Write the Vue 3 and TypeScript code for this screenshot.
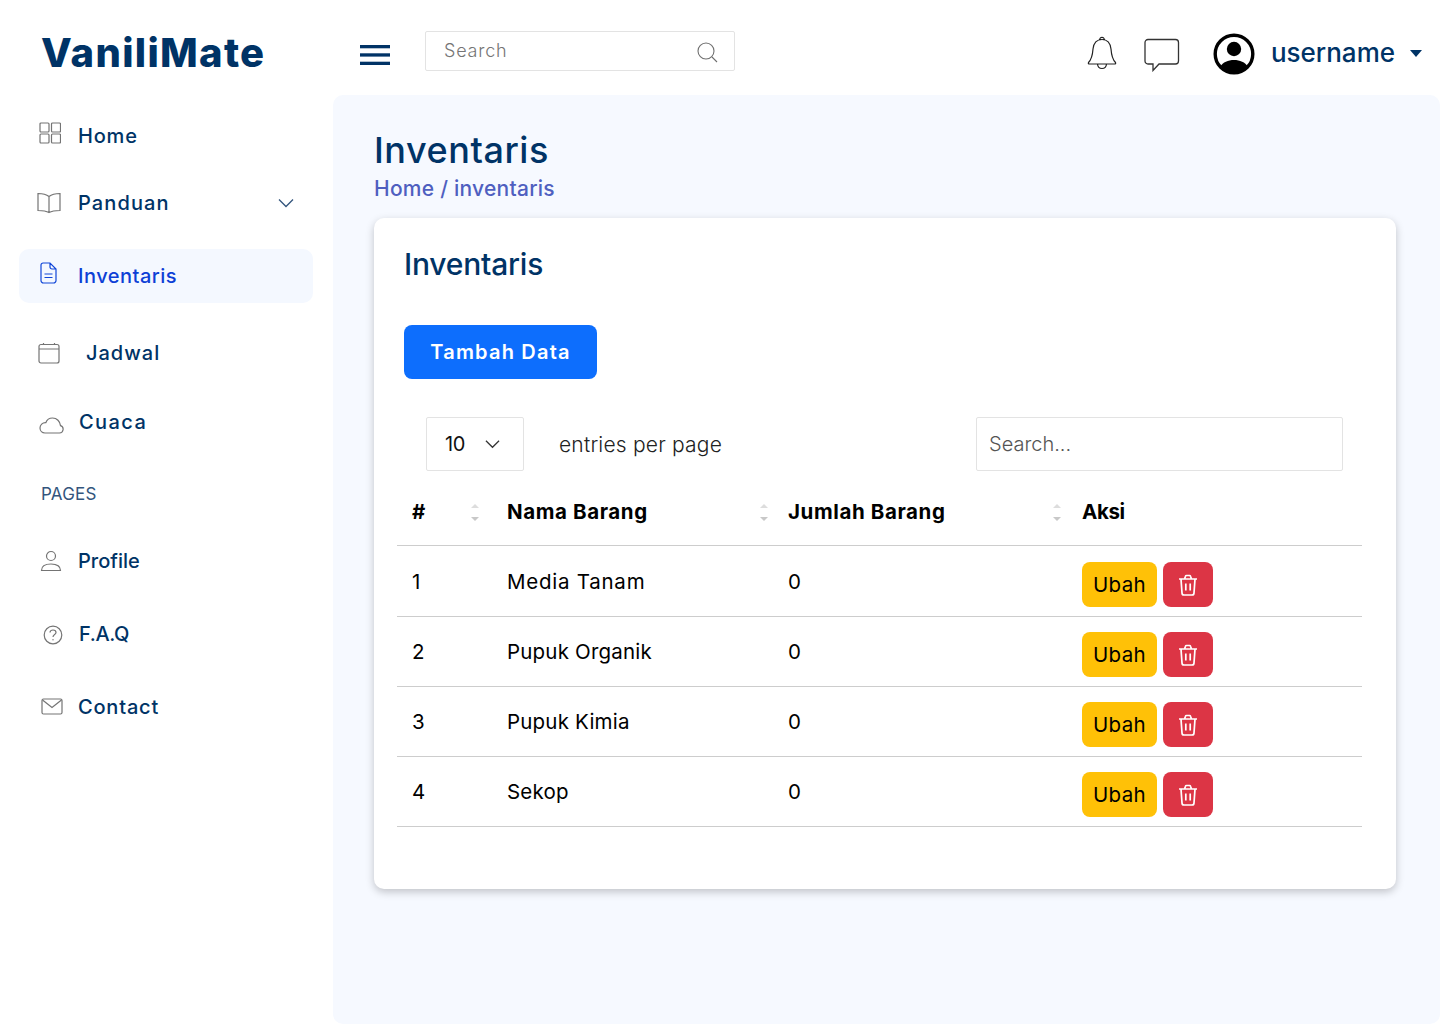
<script setup lang="ts">
interface Row { id: number; name: string; qty: number }
const rows: Row[] = [
  { id: 1, name: 'Media Tanam', qty: 0 },
  { id: 2, name: 'Pupuk Organik', qty: 0 },
  { id: 3, name: 'Pupuk Kimia', qty: 0 },
  { id: 4, name: 'Sekop', qty: 0 },
]
</script>

<template>
  <div class="app">
    <aside class="sidebar">
      <div class="logo">VaniliMate</div>
      <nav class="nav">
        <a class="item m-home">
          <svg class="ic ic-home" viewBox="0 0 22 22"><rect x="1" y="1" width="9" height="9" rx="1"/><rect x="12.500" y="1" width="9" height="9" rx="1"/><rect x="1" y="12" width="9" height="9" rx="1"/><rect x="12.500" y="12" width="9" height="9" rx="1"/></svg>
          <span class="lbl">Home</span>
        </a>
        <a class="item m-pand">
          <svg class="ic ic-book" viewBox="0 0 24 22"><path d="M12 4.500C9.500 2.600 5.500 1.600 1 1.500V18.500C5.500 18.600 9.500 19.200 12 20.500C14.500 19.200 18.500 18.600 23 18.500V1.500C18.500 1.600 14.500 2.600 12 4.500ZM12 4.500V20.500"/></svg>
          <span class="lbl lbl-pan">Panduan</span>
          <svg class="chev" viewBox="0 0 16 10"><path d="M1 1.500L8 8.500L15 1.500"/></svg>
        </a>
        <a class="item active m-inv">
          <svg class="ic ic-file" viewBox="0 0 17 22"><path d="M3 1H10L16 7V18.500A2.500 2.500 0 0 1 13.500 21H3.500A2.500 2.500 0 0 1 1 18.500V3A2 2 0 0 1 3 1ZM10 1V5A2 2 0 0 0 12 7H16M4.500 12H12.500M4.500 15.500H12.500"/></svg>
          <span class="lbl lbl-inv">Inventaris</span>
        </a>
        <a class="item m-jad">
          <svg class="ic ic-cal" viewBox="0 0 22 22"><rect x="1" y="2.500" width="20" height="18.500" rx="2"/><path d="M1 7H21M5.500 1V3M16.500 1V3"/></svg>
          <span class="lbl lbl-jad">Jadwal</span>
        </a>
        <a class="item m-cua">
          <svg class="ic ic-cloud" viewBox="0 0 25 17"><path d="M6 16H20.500A3.800 3.800 0 0 0 21.500 8.600C21 4.500 18 1 13.500 1C10.200 1 7.800 3 6.800 5.700C3.500 5.500 1 7.900 1 11C1 13.800 3.200 16 6 16Z"/></svg>
          <span class="lbl lbl-cua">Cuaca</span>
        </a>
        <div class="section">PAGES</div>
        <a class="item m-pro">
          <svg class="ic ic-user" viewBox="0 0 22 22"><circle cx="11" cy="6" r="4.500"/><path d="M1.500 20.500C1.500 16.500 5 14 11 14C17 14 20.500 16.500 20.500 20.500Z"/></svg>
          <span class="lbl lbl-pro">Profile</span>
        </a>
        <a class="item m-faq">
          <svg class="ic ic-faq" viewBox="0 0 20 20"><circle cx="10" cy="10" r="8.800"/><path d="M7 7.500C7 5.800 8.300 5 10 5C11.700 5 13 6 13 7.500C13 9.500 10 9.500 10 12"/><circle class="dot" cx="10" cy="14.800" r=".7"/></svg>
          <span class="lbl lbl-faq">F.A.Q</span>
        </a>
        <a class="item m-con">
          <svg class="ic ic-mail" viewBox="0 0 22 17"><rect x="1" y="1" width="20" height="15" rx="1.500"/><path d="M1.500 2L11 9.500L20.500 2"/></svg>
          <span class="lbl">Contact</span>
        </a>
      </nav>
    </aside>

    <div class="right">
      <header class="topbar">
        <svg class="burger" viewBox="0 0 30 20"><rect width="30" height="3.300"/><rect y="8.300" width="30" height="3.300"/><rect y="16.700" width="30" height="3.300"/></svg>
        <div class="tsearch">
          <span class="tsearch-ph">Search</span>
          <svg class="tsearch-ic" viewBox="0 0 21 21"><circle cx="9" cy="9" r="8"/><path d="M15 15L20 20"/></svg>
        </div>
        <div class="spacer"></div>
        <svg class="bell" viewBox="0 0 30 36"><path d="M15 4.500C9 4.500 6.500 9.500 6 14C5.500 21 4 25 1.500 27.500C1 28.500 1.500 29 2.500 29H27.500C28.500 29 29 28.500 28.500 27.500C26 25 24.500 21 24 14C23.500 9.500 21 4.500 15 4.500ZM12.800 4.800C12.600 1.500 17.400 1.500 17.200 4.800M10.500 29C11 35 19 35 19.500 29"/></svg>
        <svg class="chat" viewBox="0 0 36 34"><path d="M4 1.500H31.500A3 3 0 0 1 34.500 4.500V23A3 3 0 0 1 31.500 26H15L9 32.500V26H4A3 3 0 0 1 1 23V4.500A3 3 0 0 1 4 1.500Z"/></svg>
        <svg class="avatar" viewBox="0 0 42 42"><circle cx="21" cy="21" r="18.800" class="a-ring"/><circle cx="21" cy="16" r="7.200"/><path d="M7 34C10 29 15 27 21 27C27 27 32 29 35 34C31.500 37.500 26.500 39.500 21 39.500C15.500 39.500 10.500 37.500 7 34Z"/></svg>
        <span class="uname">username</span>
        <span class="caret"></span>
      </header>

      <main class="main">
        <h1 class="ptitle">Inventaris</h1>
        <div class="crumb">Home / inventaris</div>
        <section class="card">
          <h2 class="ctitle">Inventaris</h2>
          <button class="btn-add">Tambah Data</button>
          <div class="tools">
            <div class="select">
              <span class="sel-val">10</span>
              <svg class="sel-ch" viewBox="0 0 16 10"><path d="M1 1.500L8 8.500L15 1.500"/></svg>
            </div>
            <span class="per">entries per page</span>
            <div class="csearch">Search...</div>
          </div>
          <div class="table">
            <div class="tr th">
              <div class="cell c-num"><span>#</span><span class="sort"><i class="up"></i><i class="dn"></i></span></div>
              <div class="cell c-name"><span>Nama Barang</span><span class="sort"><i class="up"></i><i class="dn"></i></span></div>
              <div class="cell c-qty"><span>Jumlah Barang</span><span class="sort"><i class="up"></i><i class="dn"></i></span></div>
              <div class="cell"><span class="th-aksi">Aksi</span></div>
            </div>
            <div v-for="r in rows" :key="r.id" class="tr td">
              <div class="cell">{{ r.id }}</div>
              <div class="cell" :class="{ wide: r.id === 1 }">{{ r.name }}</div>
              <div class="cell">{{ r.qty }}</div>
              <div class="cell actions">
                <button class="btn-edit">Ubah</button>
                <button class="btn-del">
                  <svg viewBox="0 0 20 22"><path d="M1 5H19M6.500 5L7.500 2.200A1 1 0 0 1 8.500 1.500H11.500A1 1 0 0 1 12.500 2.200L13.500 5M3 5L4 19A2 2 0 0 0 6 21H14A2 2 0 0 0 16 19L17 5M7.800 9.500V16.500M12.200 9.500V16.500"/></svg>
                </button>
              </div>
            </div>
          </div>
        </section>
      </main>
    </div>
  </div>
</template>

<style>
html, body { margin: 0; background: #fff; }
</style>

<style scoped>
.app {
  width: 1440px; height: 1024px; display: flex; overflow: hidden; background: #fff;
  font-family: Inter, "Liberation Sans", sans-serif; color: #003366;
}
.sidebar { width: 333px; flex: none; display: flex; flex-direction: column; }
.logo { height: 109px; padding: 28px 0 0 41px; box-sizing: border-box; font-size: 40px; line-height: 50px; font-weight: 800; letter-spacing: 1.300px; color: #003366; }
.nav { display: flex; flex-direction: column; padding: 0 20px 0 19px; }
.item { height: 54px; display: flex; align-items: center; border-radius: 10px; position: relative; padding-left: 59px; font-size: 20px; font-weight: 500; letter-spacing: .8px; color: #003366; }
.lbl { display: block; }
.m-pand { margin-top: 13px; }
.m-inv { margin-top: 19px; }
.m-jad { margin-top: 23px; }
.m-cua { margin-top: 15px; }
.m-faq, .m-con { margin-top: 19px; }
.active { background: #f4f8ff; color: #0d3fd6; }
.lbl-pan { letter-spacing: 1.100px; }
.lbl-inv { letter-spacing: .5px; }
.lbl-jad { margin-left: 8px; letter-spacing: 1px; }
.lbl-cua { margin-left: 1px; letter-spacing: 1.400px; }
.lbl-pro { letter-spacing: 0; }
.lbl-faq { margin-left: 1px; letter-spacing: -.4px; }
.section { height: 85px; padding: 31px 0 0 22px; box-sizing: border-box; font-size: 17px; line-height: 28px; letter-spacing: .2px; color: #33557d; }
.ic { position: absolute; fill: none; stroke: #747474; stroke-width: 1.200; }
.ic-home { left: 20px; top: 13px; width: 22px; height: 22px; }
.ic-book { left: 18px; top: 16px; width: 24px; height: 22px; }
.ic-file { left: 21px; top: 13px; width: 17px; height: 22px; stroke: #1046d8; }
.ic-cal { left: 19px; top: 16px; width: 22px; height: 22px; }
.ic-cloud { left: 20px; top: 22px; width: 25px; height: 17px; }
.ic-user { left: 21px; top: 16px; width: 22px; height: 22px; }
.ic-faq { left: 24px; top: 18px; width: 20px; height: 20px; }
.ic-mail { left: 22px; top: 18px; width: 22px; height: 17px; }
.dot { fill: #747474; stroke: none; }
.chev { position: absolute; left: 259px; top: 22px; width: 16px; height: 10px; fill: none; stroke: #33557d; stroke-width: 1.300; }

.right { flex: 1; min-width: 0; display: flex; flex-direction: column; }
.topbar { height: 95px; flex: none; display: flex; align-items: flex-start; padding-left: 27px; box-sizing: border-box; }
.burger { width: 30px; height: 20px; flex: none; margin-top: 45px; fill: #003366; }
.tsearch { margin: 31px 0 0 35px; width: 310px; height: 40px; box-sizing: border-box; border: 1px solid #e3e3e3; border-radius: 2px; display: flex; align-items: center; justify-content: space-between; padding: 0 16px 0 18px; font-size: 18px; color: #757575; }
.tsearch-ph { font-weight: 300; margin-top: -1px; letter-spacing: .8px; }
.tsearch-ic { width: 21px; height: 21px; fill: none; stroke: #6f6f6f; stroke-width: 1.100; margin-top: 3px; }
.spacer { flex: 1; }
.bell { width: 30px; height: 36px; fill: none; stroke: #222; stroke-width: 1.200; margin: 35px 0 0 0; }
.chat { width: 36px; height: 34px; fill: none; stroke: #333; stroke-width: 1.300; margin: 38px 0 0 27px; }
.avatar { width: 42px; height: 42px; margin: 33px 0 0 33px; fill: #000; }
.a-ring { fill: none; stroke: #000; stroke-width: 3.400; }
.uname { margin: 37px 0 0 16px; font-size: 26px; line-height: 31px; font-weight: 500; color: #003366; }
.caret { margin: 50px 18px 0 15px; border-left: 6px solid transparent; border-right: 6px solid transparent; border-top: 7px solid #003366; }

.main { flex: 1; background: #f6f9ff; border-radius: 10px; padding: 30px 44px 0 41px; box-sizing: border-box; }
.ptitle { margin: 0; font-size: 36px; line-height: 50px; font-weight: 500; letter-spacing: .55px; color: #003366; }
.crumb { font-size: 21px; line-height: 28px; font-weight: 500; letter-spacing: .25px; color: #4f5fc0; }
.card { margin-top: 15px; height: 671px; box-sizing: border-box; background: #fff; border-radius: 10px; box-shadow: 0 3px 8px rgba(0, 0, 0, .22); padding: 26px 34px 0 23px; }
.ctitle { margin: 0; padding-left: 7px; font-size: 30px; line-height: 40px; font-weight: 500; letter-spacing: -.2px; color: #003366; }
.btn-add { display: block; margin: 41px 0 0 7px; width: 193px; height: 54px; border: 0; border-radius: 8px; background: #0d6efd; color: #fff; font: 600 20px/1 Inter, "Liberation Sans", sans-serif; letter-spacing: 1.200px; }
.tools { margin: 38px 0 0 29px; height: 54px; display: flex; align-items: center; color: #222; }
.select { width: 98px; height: 54px; box-sizing: border-box; border: 1px solid #e3e3e3; border-radius: 2px; display: flex; align-items: center; padding-left: 18px; gap: 20px; font-size: 20px; color: #111; }
.sel-val { letter-spacing: -.5px; }
.sel-ch { width: 15px; height: 10px; fill: none; stroke: #333; stroke-width: 1.300; }
.per { margin-left: 35px; font-size: 21px; font-weight: 300; letter-spacing: .2px; color: #222; }
.csearch { margin-left: auto; margin-right: 19px; width: 367px; height: 54px; box-sizing: border-box; border: 1px solid #e3e3e3; border-radius: 2px; padding-left: 12px; line-height: 52px; font-size: 20px; font-weight: 300; color: #555; }
.table { margin-top: 10px; }
.tr { display: grid; grid-template-columns: 95px 281px 294px 295px; border-bottom: 1px solid #cdcdcd; box-sizing: border-box; color: #000; }
.th { height: 65px; font-size: 20.500px; font-weight: 700; letter-spacing: .6px; }
.th-aksi { letter-spacing: -.4px; }
.td { height: 70px; font-size: 20.500px; font-weight: 400; letter-spacing: .2px; }
.th + .td { height: 71px; padding-top: 1px; }
.cell { padding-left: 15px; display: flex; align-items: center; min-width: 0; }
.wide { letter-spacing: .75px; }
.th .cell { justify-content: space-between; margin-top: -3px; }
.c-num { padding-right: 13px; }
.c-name { padding-right: 5px; }
.c-qty { padding-right: 6px; }
.sort { display: flex; flex-direction: column; gap: 9px; margin-top: 2px; }
.sort i { display: block; width: 0; height: 0; border-left: 4px solid transparent; border-right: 4px solid transparent; }
.up { border-bottom: 4px solid #dddddd; }
.dn { border-top: 4px solid #c8c8c8; }
.actions { gap: 6px; padding-top: 6px; }
.btn-edit { width: 75px; height: 45px; border: 0; border-radius: 8px; background: #ffc107; color: #000; font: 400 20.500px/1 Inter, "Liberation Sans", sans-serif; letter-spacing: .4px; padding: 2px 0 0; }
.btn-del { width: 50px; height: 45px; border: 0; border-radius: 8px; background: #dc3545; padding: 0; display: flex; align-items: center; justify-content: center; }
.btn-del svg { width: 20px; height: 22px; fill: none; stroke: #fff; stroke-width: 1.700; }
</style>
